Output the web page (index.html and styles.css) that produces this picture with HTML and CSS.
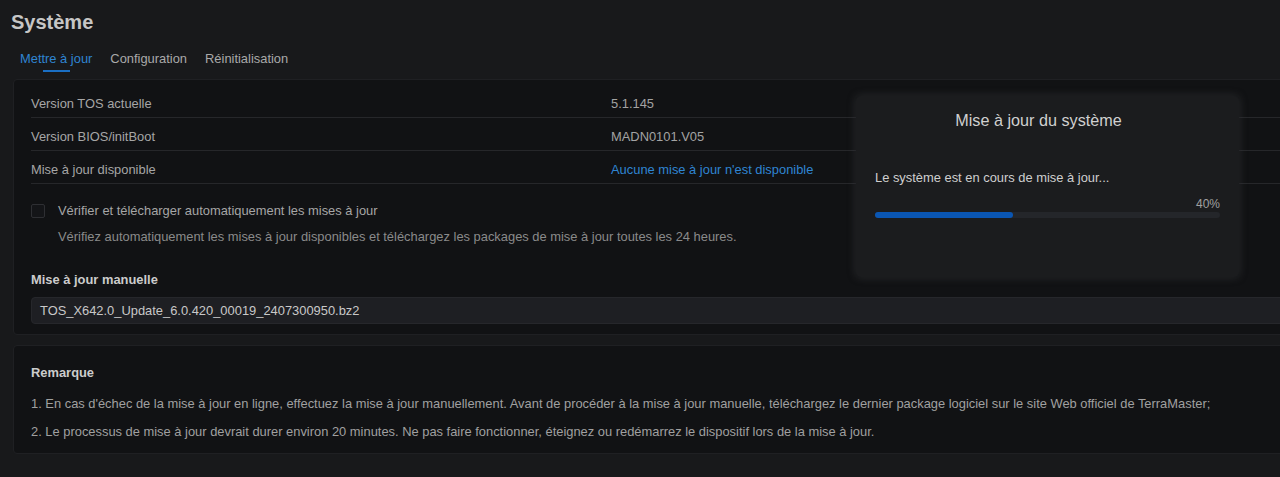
FILE: index.html
```html
<!DOCTYPE html>
<html lang="fr">
<head>
    <meta charset="UTF-8">
    <meta name="viewport" content="width=device-width, initial-scale=1.0">
    <title>Système</title>
    <link rel="stylesheet" href="styles.css">
</head>
<body>
    <div class="page">
        <h1>Système</h1>
        <div class="tabs">
            <span class="tab active">Mettre à jour</span>
            <span class="tab">Configuration</span>
            <span class="tab">Réinitialisation</span>
        </div>

        <div class="card">
            <div class="info-row">
                <span class="label">Version TOS actuelle</span>
                <span class="value">5.1.145</span>
            </div>
            <div class="info-row">
                <span class="label">Version BIOS/initBoot</span>
                <span class="value">MADN0101.V05</span>
            </div>
            <div class="info-row">
                <span class="label">Mise à jour disponible</span>
                <span class="value link">Aucune mise à jour n'est disponible</span>
            </div>

            <div class="auto-check">
                <span class="checkbox"></span>
                <span class="check-label">Vérifier et télécharger automatiquement les mises à jour</span>
            </div>
            <p class="hint">Vérifiez automatiquement les mises à jour disponibles et téléchargez les packages de mise à jour toutes les 24 heures.</p>

            <h3>Mise à jour manuelle</h3>
            <div class="file-input">TOS_X642.0_Update_6.0.420_00019_2407300950.bz2</div>
        </div>

        <div class="card note">
            <h3>Remarque</h3>
            <p>1. En cas d'échec de la mise à jour en ligne, effectuez la mise à jour manuellement. Avant de procéder à la mise à jour manuelle, téléchargez le dernier package logiciel sur le site Web officiel de TerraMaster;</p>
            <p>2. Le processus de mise à jour devrait durer environ 20 minutes. Ne pas faire fonctionner, éteignez ou redémarrez le dispositif lors de la mise à jour.</p>
        </div>
    </div>

    <div class="modal">
        <h2>Mise à jour du système</h2>
        <p class="status">Le système est en cours de mise à jour...</p>
        <div class="percent">40%</div>
        <div class="progress">
            <div class="progress-fill" style="width: 40%"></div>
        </div>
    </div>
</body>
</html>
```

FILE: styles.css
```css
body {
    font-family: "Liberation Sans", Arial, sans-serif;
    background-color: #18191b;
    color: #a6a6a6;
    margin: 0;
    padding: 0;
    overflow: hidden;
    position: relative;
    height: 477px;
}
.page {
    padding: 8px 0 0 13px;
}
h1 {
    font-size: 20px;
    font-weight: bold;
    color: #c6c6c6;
    margin: 2px 0 0 -2px;
    line-height: 24px;
}
.tabs {
    display: flex;
    gap: 18px;
    margin: 17px 0 0 7px;
    height: 28px;
}
.tab {
    font-size: 12.9px;
    color: #a9a9a9;
    line-height: 16px;
    position: relative;
}
.tab.active {
    color: #2f85d2;
}
.tab.active::after {
    content: "";
    position: absolute;
    left: 23px;
    width: 27px;
    top: 19px;
    height: 2px;
    background-color: #1a6fc4;
}
.card {
    background-color: #111214;
    border: 1px solid #1f2023;
    border-radius: 4px;
    margin-right: -30px;
    padding: 5px 0 10px 17px;
}
.info-row {
    display: flex;
    height: 28px;
    padding-top: 4px;
    align-items: center;
    border-bottom: 1px solid #26272a;
    font-size: 12.9px;
}
.label {
    width: 580px;
    color: #a6a6a6;
}
.value {
    color: #a3a3a3;
}
.value.link {
    color: #2f85d2;
}
.auto-check {
    display: flex;
    align-items: center;
    margin-top: 19px;
    font-size: 12.9px;
}
.checkbox {
    width: 12px;
    height: 12px;
    border: 1px solid #2e2f33;
    border-radius: 2px;
    background-color: #141518;
    margin-right: 13px;
}
.check-label {
    color: #a6a6a6;
}
.hint {
    font-size: 12.9px;
    color: #8a8a8a;
    margin: 11px 0 0 27px;
}
.card h3 {
    font-size: 12.9px;
    font-weight: bold;
    color: #cccccc;
    margin: 28px 0 0 0;
}
.file-input {
    margin-top: 10px;
    height: 25px;
    line-height: 25px;
    background-color: #1e1f23;
    border: 1px solid #26272b;
    border-radius: 4px;
    padding-left: 8px;
    font-size: 12.9px;
    color: #c8c8c8;
}
.card.note {
    margin-top: 10px;
    padding: 13px 0 1px 17px;
}
.card.note h3 {
    margin: 6px 0 16px 0;
}
.card.note p {
    font-size: 12.9px;
    color: #a0a0a0;
    margin: 0 0 13px 0;
    line-height: 15px;
}
.modal {
    position: absolute;
    left: 856px;
    top: 96px;
    width: 383px;
    height: 181px;
    box-sizing: border-box;
    background-color: #1b1c1e;
    border-radius: 5px;
    box-shadow: 0 0 7px 1px rgba(58, 60, 64, 0.55), 0 0 3px rgba(0, 0, 0, 0.6);
    padding: 0 19px;
}
.modal h2 {
    font-size: 16.2px;
    font-weight: normal;
    color: #d0d0d0;
    text-align: center;
    margin: 15px 0 0 0;
    padding-right: 18px;
    line-height: 19px;
}
.status {
    font-size: 12.9px;
    color: #cfcfcf;
    margin: 40px 0 0 0;
    line-height: 15px;
}
.percent {
    text-align: right;
    font-size: 12px;
    color: #a0a0a0;
    margin-top: 12px;
    line-height: 14px;
}
.progress {
    margin-top: 1px;
    height: 6px;
    background-color: #24262a;
    border-radius: 3px;
}
.progress-fill {
    height: 100%;
    background-color: #0a56b3;
    border-radius: 3px;
}
```
